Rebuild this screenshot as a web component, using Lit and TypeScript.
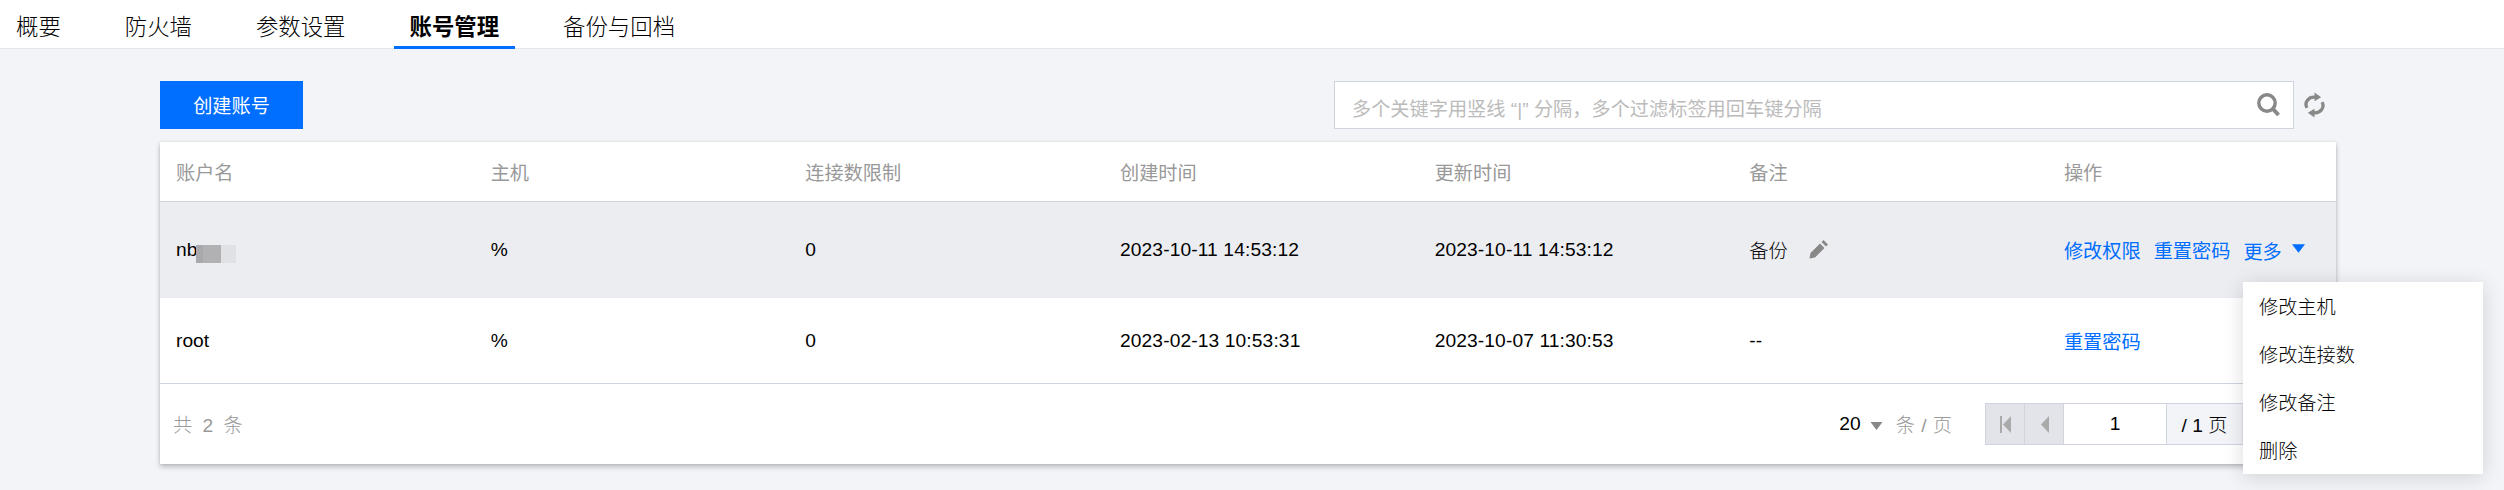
import { LitElement, html, css } from "lit";
import { customElement } from "lit/decorators.js";

const TABS = ["概要", "防火墙", "参数设置", "账号管理", "备份与回档"];
const HEADERS = ["账户名", "主机", "连接数限制", "创建时间", "更新时间", "备注", "操作"];
const MENU = ["修改主机", "修改连接数", "修改备注", "删除"];

const caret = (cls: string) => html`<svg class=${cls} viewBox="0 0 12 8"><path d="M0 0H12L6 8Z" fill="currentColor"/></svg>`;

@customElement("app-root")
export class AppRoot extends LitElement {
  static styles = css`
    :host { display: block; min-height: 490px; background: #f2f4f8; font-family: "Liberation Sans", "Noto Sans CJK SC", sans-serif; font-size: 19.2px; font-weight: 300; color: #000; overflow: hidden; }
    .tabs { display: flex; height: 48px; background: #fff; border-bottom: 1px solid #e3e6ec; }
    .tab { height: 49px; padding: 3px 16px 0; margin-right: 32px; display: flex; align-items: center; font-size: 22.4px; box-sizing: border-box; border-bottom: 3px solid transparent; }
    .tab.on { font-weight: 700; border-bottom-color: #006eff; }
    main { padding: 32px 168px 25px 160px; }
    .tools { display: flex; justify-content: space-between; align-items: center; height: 48px; margin-bottom: 13px; }
    .btn { width: 143px; height: 48px; background: #006eff; color: #fff; font-weight: 400; display: flex; align-items: center; justify-content: center; }
    .searchwrap { display: flex; align-items: center; margin-right: 11px; }
    .search { width: 960px; height: 48px; box-sizing: border-box; border: 1.5px solid #cfd5de; background: #fff; display: flex; align-items: center; justify-content: space-between; padding: 0 13px 0 17px; color: #bbb; font-weight: 400; }
    .search span { padding-top: 5px; }
    .search svg { width: 24px; height: 26px; }
    .refresh { width: 21px; height: 26px; margin-left: 10px; }
    .card { position: relative; background: #fff; box-shadow: 0 3px 5px 0 rgba(0,0,0,.22), 0 0 3px rgba(0,0,0,.1); }
    .row { display: grid; grid-template-columns: repeat(6, 314.67px) 288px; align-items: center; }
    .row > div { padding-left: 16px; display: flex; align-items: center; }
    .row > div.num { letter-spacing: .12px; }
    .head { height: 59px; color: #999; font-weight: 400; border-bottom: 1.5px solid #cfd5de; }
    .r1 { height: 94.5px; background: #ecedf1; padding-top: 1px; box-sizing: border-box; }
    .r2 { height: 87.5px; padding-top: 1px; border-bottom: 1.5px solid #cfd5de; border-top: 1px solid #e8eaef; box-sizing: border-box; }
    .name { position: relative; }
    .mask { position: absolute; left: 36px; top: calc(50% - 5px); width: 40px; height: 18px; background: linear-gradient(90deg, #a9a9ad 0 7px, #b1b1b4 7px 25px, #e0e1e5 25px); }
    .pen { width: 19px; height: 19px; margin-left: 21px; }
    a { color: #006eff; font-weight: 400; text-decoration: none; margin-right: 13px; }
    .more { display: inline-flex; align-items: center; }
    .more a { margin-right: 10px; padding-top: 2px; }
    .caret { width: 13px; height: 9px; color: #006eff; margin-top: -3px; }
    .foot { height: 80px; display: flex; align-items: center; justify-content: space-between; padding: 0 16px 0 13px; }
    .total { color: #999; word-spacing: 5px; }
    .right { display: flex; align-items: center; }
    .scaret { width: 13px; height: 8px; color: #888; margin: 3px 13px 0 9px; }
    .perpage { color: #999; word-spacing: 1px; margin-right: 33px; }
    .pager { display: flex; height: 42px; box-sizing: border-box; border: 1.5px solid #cfd5de; background: #fff; }
    .pager > div { display: flex; align-items: center; justify-content: center; box-sizing: border-box; }
    .pb { width: 39px; background: #e2e4ea; border-right: 1.5px solid #cfd5de; color: #aaa; }
    .pb.end { width: 38px; border-right: 0; }
    .pb svg { width: 11px; height: 17px; }
    .pi { width: 102px; }
    .pl { width: 76px; background: #f2f4f8; border-left: 1.5px solid #cfd5de; }
    .menu { position: absolute; left: 2083px; top: 140px; width: 240px; background: #fff; box-shadow: 0 3px 20px rgba(0,0,0,.14); }
    .menu div { height: 48px; display: flex; align-items: center; padding-left: 16px; }
  `;

  private actions(more: boolean) {
    return more
      ? html`<a>修改权限</a><a>重置密码</a><span class="more"><a>更多</a>${caret("caret")}</span>`
      : html`<a>重置密码</a>`;
  }

  render() {
    return html`
      <nav class="tabs">${TABS.map((t, i) => html`<div class="tab ${i === 3 ? "on" : ""}">${t}</div>`)}</nav>
      <main>
        <div class="tools">
          <div class="btn">创建账号</div>
          <div class="searchwrap">
            <div class="search">
              <span>多个关键字用竖线 “|” 分隔，多个过滤标签用回车键分隔</span>
              <svg viewBox="0 0 24 26"><circle cx="11" cy="11" r="8.2" fill="none" stroke="#888" stroke-width="3.4"/><path d="M17 17L22.5 23" stroke="#888" stroke-width="4" fill="none"/></svg>
            </div>
            <svg class="refresh" viewBox="0 0 22 26" fill="none" stroke="#888" stroke-width="3.4">
              <path d="M3 16C0 10 5 4 12 5"/><path d="M19 10C22 16 17 22 10 21"/>
              <path d="M11 0L18 5L11 9Z M11 17L4 21L11 26Z" fill="#888" stroke="none"/>
            </svg>
          </div>
        </div>
        <section class="card">
          <div class="row head">${HEADERS.map((h) => html`<div>${h}</div>`)}</div>
          <div class="row r1">
            <div class="name">nb<i class="mask"></i></div>
            <div>%</div><div>0</div><div class="num">2023-10-11 14:53:12</div><div class="num">2023-10-11 14:53:12</div>
            <div>备份<svg class="pen" viewBox="0 0 19 19"><path d="M0.5 18.5L1.5 13L11 3.5L15.5 8L6 17.5Z M12.5 2L14.5 0L19 4.5L17 6.5Z" fill="#888"/></svg></div>
            <div>${this.actions(true)}</div>
          </div>
          <div class="row r2">
            <div>root</div><div>%</div><div>0</div><div class="num">2023-02-13 10:53:31</div><div class="num">2023-10-07 11:30:53</div><div>--</div>
            <div>${this.actions(false)}</div>
          </div>
          <div class="foot">
            <div class="total">共 2 条</div>
            <div class="right">
              <span>20</span>${caret("scaret")}
              <span class="perpage">条 / 页</span>
              <div class="pager">
                <div class="pb"><svg viewBox="0 0 11 17"><path d="M0 0H2V17H0Z M11 0V17L3 8.5Z" fill="currentColor"/></svg></div>
                <div class="pb"><svg viewBox="0 0 11 17"><path d="M10 0V17L2 8.5Z" fill="currentColor"/></svg></div>
                <div class="pi">1</div>
                <div class="pl">/ 1 页</div>
                <div class="pb"></div>
                <div class="pb end"></div>
              </div>
            </div>
          </div>
          <div class="menu">${MENU.map((m) => html`<div>${m}</div>`)}</div>
        </section>
      </main>
    `;
  }
}
